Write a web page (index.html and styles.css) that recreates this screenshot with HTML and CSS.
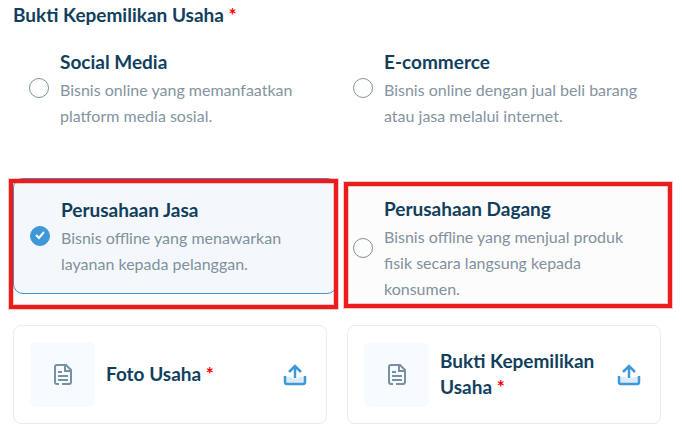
FILE: index.html
```html
<!DOCTYPE html>
<html lang="id">
<head>
  <meta charset="UTF-8">
  <meta name="viewport" content="width=device-width, initial-scale=1.0">
  <title>Bukti Kepemilikan Usaha</title>
  <link rel="stylesheet" href="styles.css">
</head>
<body>
  <form class="container">
    <h2 class="title" id="groupTitle">Bukti Kepemilikan Usaha <span class="required">*</span></h2>

    <div class="options" role="radiogroup" aria-labelledby="groupTitle">
      <label class="option" for="socialMedia">
        <input type="radio" name="usaha" id="socialMedia">
        <span class="option-text">
          <span class="option-title">Social Media</span>
          <span class="option-desc">Bisnis online yang memanfaatkan platform media sosial.</span>
        </span>
      </label>

      <label class="option" for="ecommerce">
        <input type="radio" name="usaha" id="ecommerce">
        <span class="option-text">
          <span class="option-title">E-commerce</span>
          <span class="option-desc">Bisnis online dengan jual beli barang atau jasa melalui internet.</span>
        </span>
      </label>

      <label class="option selected" for="jasa">
        <input type="radio" name="usaha" id="jasa" checked>
        <span class="option-text">
          <span class="option-title">Perusahaan Jasa</span>
          <span class="option-desc">Bisnis offline yang menawarkan layanan kepada pelanggan.</span>
        </span>
        <span class="marker marker-left"></span>
      </label>

      <label class="option" for="dagang">
        <input type="radio" name="usaha" id="dagang">
        <span class="option-text">
          <span class="option-title">Perusahaan Dagang</span>
          <span class="option-desc">Bisnis offline yang menjual produk fisik secara langsung kepada konsumen.</span>
        </span>
        <span class="marker marker-right"></span>
      </label>
    </div>

    <div class="uploads">
      <div class="upload-card">
        <div class="file-icon">
          <svg width="24" height="24" viewBox="0 0 24 24" fill="none" stroke="#7690a4" stroke-width="2">
            <path d="M8 21H6a2 2 0 0 1-2-2V4a2 2 0 0 1 2-2h9l5 5v12a2 2 0 0 1-2 2h-7"/>
            <path d="M14 2v6h6M7 9h4M7 13h10M7 17h10"/>
          </svg>
        </div>
        <h3 class="upload-title">Foto Usaha <span class="required">*</span></h3>
        <button type="button" class="upload-button" aria-label="Unggah Foto Usaha">
          <svg width="24" height="24" viewBox="0 0 24 24" fill="none">
            <path d="M3 14h5c1 2 7 2 8 0h5v6H3z" fill="#dcebf8"/>
            <path d="M12 15V3M6 9l6-6 6 6M2 13v6a2 2 0 0 0 2 2h16a2 2 0 0 0 2-2v-6" stroke="#3f99d9" stroke-width="2.500"/>
          </svg>
        </button>
      </div>

      <div class="upload-card">
        <div class="file-icon">
          <svg width="24" height="24" viewBox="0 0 24 24" fill="none" stroke="#7690a4" stroke-width="2">
            <path d="M8 21H6a2 2 0 0 1-2-2V4a2 2 0 0 1 2-2h9l5 5v12a2 2 0 0 1-2 2h-7"/>
            <path d="M14 2v6h6M7 9h4M7 13h10M7 17h10"/>
          </svg>
        </div>
        <h3 class="upload-title">Bukti Kepemilikan Usaha <span class="required">*</span></h3>
        <button type="button" class="upload-button" aria-label="Unggah Bukti Kepemilikan Usaha">
          <svg width="24" height="24" viewBox="0 0 24 24" fill="none">
            <path d="M3 14h5c1 2 7 2 8 0h5v6H3z" fill="#dcebf8"/>
            <path d="M12 15V3M6 9l6-6 6 6M2 13v6a2 2 0 0 0 2 2h16a2 2 0 0 0 2-2v-6" stroke="#3f99d9" stroke-width="2.500"/>
          </svg>
        </button>
      </div>
    </div>
  </form>
</body>
</html>
```
FILE: styles.css
```css
* {
  box-sizing: border-box;
}

body {
  margin: 0;
  font-family: Lato, sans-serif;
  font-size: 16px;
  line-height: 26px;
  color: #84939f;
  background-color: #fff;
}

.container {
  padding: 0 21px 8px 13px;
}

.title,
.option-title,
.upload-title {
  margin: 0;
  font-size: 19px;
  font-weight: 700;
  color: #123f5e;
}

.title {
  line-height: 30px;
}

.required {
  color: #ff0000;
}

/* Business type options */
.options {
  display: grid;
  grid-template-columns: 1fr 1fr;
  row-gap: 33px;
  align-items: start;
  padding-top: 1px;
}

.option {
  position: relative;
  display: flex;
  align-items: center;
  gap: 11px;
  padding: 16px;
  border-radius: 10px;
  cursor: pointer;
}

.option.selected {
  border: 1px solid #3f99d9;
  background-color: #f7fbff;
}

.option input {
  appearance: none;
  flex: none;
  width: 20px;
  height: 20px;
  margin: 0;
  border: 1px solid #8091a0;
  border-radius: 50%;
  background-color: #fff;
}

.option input:checked {
  border-color: #3f99d9;
  background: #3f99d9 url("data:image/svg+xml,%3Csvg xmlns='http://www.w3.org/2000/svg' viewBox='0 0 18 18'%3E%3Cpath d='M5 8l3 3 5-6' fill='none' stroke='white' stroke-width='2'/%3E%3C/svg%3E") center no-repeat;
}

.option-title,
.option-desc {
  display: block;
}

.option-title {
  line-height: 30px;
}

/* Red highlight frames over the offline options */
.marker {
  position: absolute;
  border: 4px solid #ea1c1c;
  background-color: rgba(0, 0, 0, 0.01);
  box-shadow: 0 0 0 1px rgba(234, 28, 28, 0.25), inset 0 0 0 1px rgba(234, 28, 28, 0.25);
  pointer-events: none;
}

.marker-left {
  top: 0;
  right: -2px;
  bottom: -16px;
  left: -5px;
}

.marker-right {
  top: 4px;
  right: -11px;
  bottom: 10px;
  left: 7px;
}

/* Upload cards */
.uploads {
  display: grid;
  grid-template-columns: 1fr 1fr;
  gap: 20px;
  margin-top: 7px;
}

.upload-card {
  display: flex;
  align-items: center;
  gap: 11px;
  padding: 16px;
  border: 1px solid #ebebeb;
  border-radius: 8px;
}

.file-icon {
  display: flex;
  flex: none;
  align-items: center;
  justify-content: center;
  width: 65px;
  height: 65px;
  border-radius: 6px;
  background-color: #f7fbff;
}

.upload-title {
  flex: 1;
  padding-bottom: 2px;
}

.upload-button {
  display: flex;
  flex: none;
  align-items: center;
  justify-content: center;
  width: 30px;
  height: 30px;
  padding: 0;
  border: none;
  background: none;
  cursor: pointer;
}
```
